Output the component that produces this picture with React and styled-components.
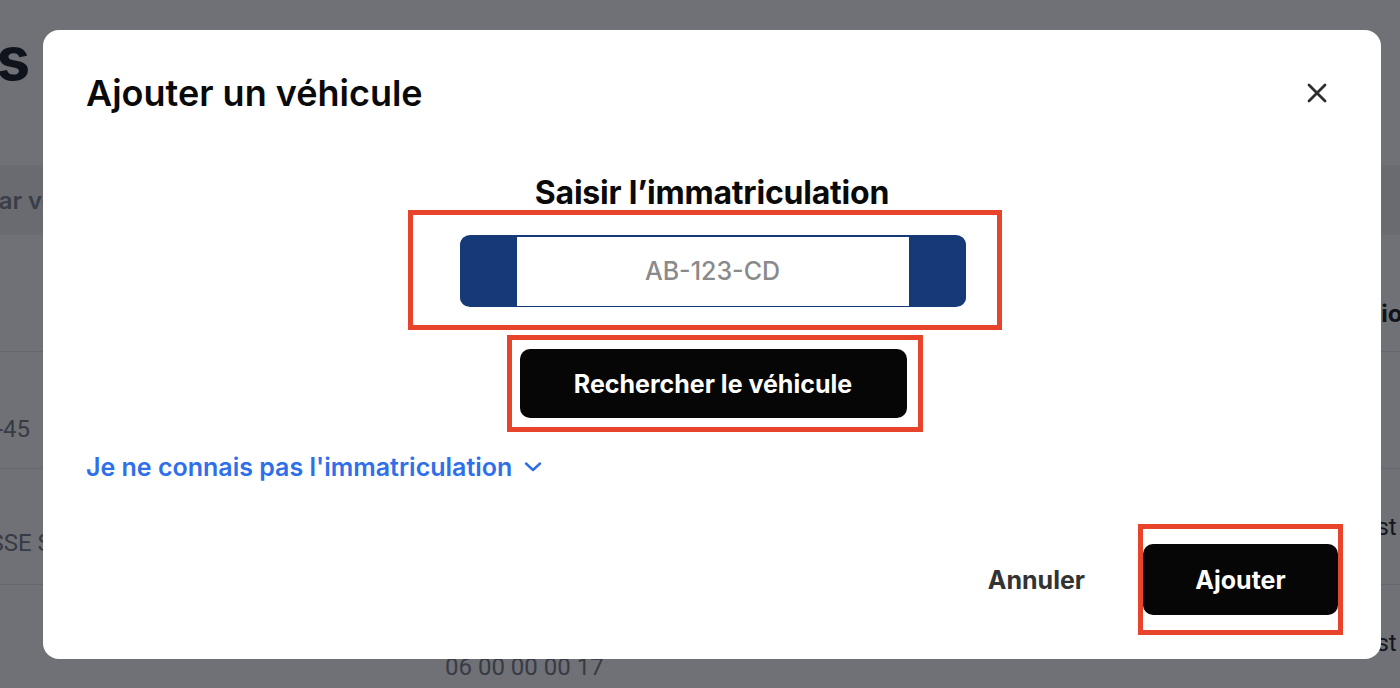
import React from "react";
import styled, { createGlobalStyle } from "styled-components";

const GlobalStyle = createGlobalStyle`
  html, body {
    margin: 0;
    padding: 0;
    height: 100%;
  }
  body {
    font-family: Inter, "Noto Sans", sans-serif;
    background: #ffffff;
    overflow: hidden;
  }
  * {
    box-sizing: border-box;
  }
`;

const ChevronDown = () => (
  <svg width="18" height="10" viewBox="0 0 18 10" fill="none">
    <path
      d="M2 1.5 L9 8 L16 1.5"
      stroke="currentColor"
      strokeWidth="2.4"
      strokeLinecap="round"
      strokeLinejoin="round"
    />
  </svg>
);

const CloseIcon = () => (
  <svg width="20" height="20" viewBox="0 0 20 20" fill="none">
    <path
      d="M2 2 L18 18 M18 2 L2 18"
      stroke="currentColor"
      strokeWidth="2.8"
      strokeLinecap="round"
    />
  </svg>
);

const App = () => {
  return (
    <>
      <GlobalStyle />
      <Page>
        <TitleRow>
          <ClipCell $right={90}>
            <PageTitle>Véhicules</PageTitle>
          </ClipCell>
        </TitleRow>
        <SearchBand>
          <ClipCell $right={0}>
            <SearchText>Rechercher par véhicule</SearchText>
          </ClipCell>
        </SearchBand>
        <TableRow $height={117}>
          <Cell />
          <Cell />
          <Cell />
          <Cell $v="end" $bottom={23}>
            <HeadText>Station</HeadText>
          </Cell>
        </TableRow>
        <TableRow $height={117}>
          <Cell $v="end" $h="end" $bottom={25} $right={90}>
            <RowText>AB-123-45</RowText>
          </Cell>
          <Cell />
          <Cell />
          <Cell />
        </TableRow>
        <TableRow $height={116}>
          <Cell $v="end" $h="end" $bottom={27} $right={18}>
            <RowText>ADRESSE SIÈGE</RowText>
          </Cell>
          <Cell />
          <Cell />
          <Cell $v="center">
            <RowText $dark>Ouest</RowText>
          </Cell>
        </TableRow>
        <TableRow $height={117}>
          <Cell />
          <Cell />
          <Cell $v="end" $bottom={20}>
            <RowText>06 00 00 00 17</RowText>
          </Cell>
          <Cell $v="center">
            <RowText $dark>Ouest</RowText>
          </Cell>
        </TableRow>
      </Page>

      <Overlay>
        <Modal role="dialog" aria-labelledby="add-vehicle-title">
          <ModalHeader>
            <ModalTitle id="add-vehicle-title">Ajouter un véhicule</ModalTitle>
            <CloseButton aria-label="Fermer">
              <CloseIcon />
            </CloseButton>
          </ModalHeader>

          <ModalBody>
            <PlateSection>
              <SectionTitle>Saisir l’immatriculation</SectionTitle>
              <Highlight $pad="20px 31px 18px 47px" $shift={-10}>
                <Plate>
                  <PlateBand />
                  <PlateInput placeholder="AB-123-CD" />
                  <PlateBand />
                </Plate>
              </Highlight>
              <Highlight $pad="9px 11px 9px 8px" $shift={0}>
                <PrimaryButton $width={387}>Rechercher le véhicule</PrimaryButton>
              </Highlight>
            </PlateSection>

            <ToggleLink type="button">
              Je ne connais pas l'immatriculation
              <ChevronDown />
            </ToggleLink>
          </ModalBody>

          <ModalFooter>
            <GhostButton type="button">Annuler</GhostButton>
            <Highlight $pad="15px 0">
              <PrimaryButton $width={195} $height={71}>
                Ajouter
              </PrimaryButton>
            </Highlight>
          </ModalFooter>
        </Modal>
      </Overlay>
    </>
  );
};
export default App;

/* page behind the dialog */

const Page = styled.div`
  height: 100vh;
  overflow: hidden;
  padding-top: 28px;
`;

const TitleRow = styled.div`
  display: grid;
  grid-template-columns: 120px 1fr;
  height: 137px;
`;

const ClipCell = styled.div`
  display: flex;
  justify-content: flex-end;
  align-items: flex-start;
  overflow: hidden;
  white-space: nowrap;
  padding-right: ${(p) => p.$right}px;
`;

const PageTitle = styled.h1`
  margin: 0;
  font-size: 60px;
  line-height: 60px;
  font-weight: 700;
  color: #0f141c;
`;

const SearchBand = styled.div`
  display: grid;
  grid-template-columns: 126px 1fr;
  align-items: center;
  height: 70px;
  background: #eff0f2;

  & > div {
    align-items: center;
  }
`;

const SearchText = styled.span`
  font-size: 24px;
  font-weight: 600;
  color: #7a808c;
`;

const TableRow = styled.div`
  display: grid;
  grid-template-columns: 120px 325px 1fr 66px;
  height: ${(p) => p.$height}px;
  border-bottom: 1px solid #e3e5e9;
`;

const Cell = styled.div`
  display: flex;
  align-items: ${(p) =>
    p.$v === "center" ? "center" : p.$v === "end" ? "flex-end" : "flex-start"};
  justify-content: ${(p) => (p.$h === "end" ? "flex-end" : "flex-start")};
  padding-bottom: ${(p) => p.$bottom || 0}px;
  padding-right: ${(p) => p.$right || 0}px;
  overflow: hidden;
  white-space: nowrap;
`;

const HeadText = styled.span`
  font-size: 24px;
  line-height: 28px;
  font-weight: 700;
  color: #0f141c;
`;

const RowText = styled.span`
  font-family: Roboto, "Noto Sans", sans-serif;
  font-size: 24px;
  line-height: 28px;
  font-weight: 400;
  color: ${(p) => (p.$dark ? "#1a1f29" : "#737985")};
`;

/* dialog */

const Overlay = styled.div`
  position: fixed;
  inset: 0;
  background: rgba(15, 18, 27, 0.6);
  display: flex;
  justify-content: center;
  align-items: flex-start;
  padding: 30px 0 0 24px;
`;

const Modal = styled.div`
  width: 1338px;
  background: #ffffff;
  border-radius: 16px;
  padding: 41px 38px 24px 43px;
  display: flex;
  flex-direction: column;
`;

const ModalHeader = styled.div`
  display: flex;
  justify-content: space-between;
  align-items: center;
  height: 44px;
`;

const ModalTitle = styled.h2`
  margin: 0;
  font-size: 36px;
  line-height: 44px;
  font-weight: 600;
  color: #0a0a0a;
`;

const CloseButton = styled.button`
  width: 36px;
  height: 36px;
  margin-right: 8px;
  padding: 0;
  border: none;
  background: none;
  color: #2e2e2e;
  display: flex;
  align-items: center;
  justify-content: center;
  cursor: pointer;
`;

const ModalBody = styled.div`
  margin-top: 61px;
  display: flex;
  flex-direction: column;
  gap: 20px;
`;

const PlateSection = styled.div`
  display: flex;
  flex-direction: column;
  align-items: center;
  gap: 5px;
`;

const SectionTitle = styled.h3`
  margin: 0 5px -5px 0;
  font-size: 32px;
  line-height: 34px;
  font-weight: 700;
  letter-spacing: -0.2px;
  color: #0a0a0a;
`;

const Highlight = styled.div`
  border: 5px solid #e8432b;
  padding: ${(p) => p.$pad};
  display: flex;
  justify-content: center;
  margin-left: ${(p) => (p.$shift > 0 ? p.$shift * 2 : 0)}px;
  margin-right: ${(p) => (p.$shift < 0 ? -p.$shift * 2 : 0)}px;
`;

const Plate = styled.div`
  width: 506px;
  height: 72px;
  display: grid;
  grid-template-columns: 57px 1fr 57px;
  background: #163a78;
  border-radius: 10px;
  padding: 1.5px 0;
  overflow: hidden;
`;

const PlateBand = styled.div`
  background: #163a78;
`;

const PlateInput = styled.input`
  width: 100%;
  min-width: 0;
  height: 100%;
  border: none;
  outline: none;
  background: #ffffff;
  text-align: center;
  font-family: Inter, "Noto Sans", sans-serif;
  font-size: 25px;
  font-weight: 500;
  color: #222;

  &::placeholder {
    color: #8a8a8a;
  }
`;

const PrimaryButton = styled.button`
  width: ${(p) => p.$width}px;
  height: ${(p) => p.$height || 69}px;
  border: none;
  border-radius: 10px;
  background: #060606;
  color: #ffffff;
  font-family: Inter, "Noto Sans", sans-serif;
  font-size: 25px;
  font-weight: 700;
  cursor: pointer;
`;

const ToggleLink = styled.button`
  align-self: flex-start;
  display: flex;
  align-items: center;
  gap: 12px;
  padding: 0;
  border: none;
  background: none;
  color: #2f6fea;
  font-family: Inter, "Noto Sans", sans-serif;
  font-size: 25px;
  line-height: 30px;
  font-weight: 600;
  cursor: pointer;
`;

const ModalFooter = styled.div`
  margin-top: 42px;
  display: flex;
  justify-content: flex-end;
  align-items: center;
  gap: 53px;
`;

const GhostButton = styled.button`
  padding: 0;
  border: none;
  background: none;
  color: #333333;
  font-family: Inter, "Noto Sans", sans-serif;
  font-size: 25px;
  font-weight: 700;
  cursor: pointer;
`;
